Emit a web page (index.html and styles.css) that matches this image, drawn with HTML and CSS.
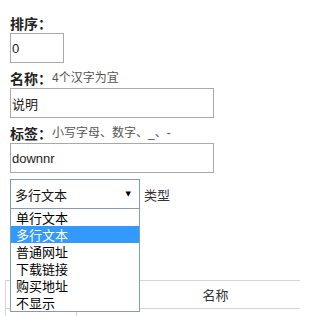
FILE: index.html
```html
<!DOCTYPE html>
<html lang="zh-CN">
<head>
<meta charset="utf-8">
<title>字段设置</title>
<link rel="stylesheet" href="styles.css">
</head>
<body>
<div class="form">
  <div class="field">
    <div class="label"><span class="label-text">排序</span><span class="colon">：</span></div>
    <input class="input input-short" type="text" value="0">
  </div>
  <div class="field">
    <div class="label"><span class="label-text">名称</span><span class="colon">：</span><span class="hint">4个汉字为宜</span></div>
    <input class="input input-long" type="text" value="说明">
  </div>
  <div class="field">
    <div class="label"><span class="label-text">标签</span><span class="colon">：</span><span class="hint">小写字母、数字、_、-</span></div>
    <input class="input input-long" type="text" value="downnr">
  </div>
  <div class="select-row">
    <div class="select-wrap">
      <div class="select">
        <span class="select-value">多行文本</span>
        <span class="select-arrow">▼</span>
      </div>
      <ul class="select-list">
        <li class="option">单行文本</li>
        <li class="option option-active">多行文本</li>
        <li class="option">普通网址</li>
        <li class="option">下载链接</li>
        <li class="option">购买地址</li>
        <li class="option">不显示</li>
      </ul>
    </div>
    <span class="select-note">类型</span>
  </div>
</div>
<table class="grid">
  <tr class="grid-head">
    <th class="col-first"></th>
    <th class="col-name">名称</th>
  </tr>
  <tr class="grid-row">
    <td class="col-first"></td>
    <td class="col-name"></td>
  </tr>
</table>
</body>
</html>
```
FILE: styles.css
```css
html, body {
  margin: 0;
  padding: 0;
  background: #fff;
  overflow: hidden;
}
body {
  width: 300px;
  height: 316px;
  font-family: "Liberation Sans", "Noto Sans CJK SC", sans-serif;
  color: #222;
}
.form {
  padding: 13px 0 0 10px;
}
.field {
  display: flex;
  flex-direction: column;
  align-items: flex-start;
}
.field + .field {
  margin-top: 5px;
}
.label {
  display: flex;
  align-items: center;
  height: 20px;
  white-space: nowrap;
}
.label-text {
  font-family: "Noto Sans CJK SC", sans-serif;
  font-size: 14px;
  font-weight: bold;
  line-height: 20px;
  color: #222;
}
.colon {
  display: inline-block;
  width: 14px;
  overflow: hidden;
  font-family: "Noto Sans CJK SC", sans-serif;
  font-size: 14px;
  font-weight: bold;
  line-height: 20px;
  text-align: center;
  color: #222;
}
.hint {
  font-size: 12px;
  line-height: 20px;
  color: #555;
}
.input {
  box-sizing: border-box;
  height: 30px;
  margin: 0;
  padding: 0 1px;
  border: 1px solid #a9a9a9;
  border-radius: 0;
  font-family: "Liberation Sans", "Noto Sans CJK SC", sans-serif;
  font-size: 13px;
  color: #222;
  background: #fff;
  outline: none;
}
.input-short {
  width: 54px;
}
.input-long {
  width: 204px;
}
.select-row {
  display: flex;
  align-items: center;
  margin-top: 6px;
}
.select-wrap {
  position: relative;
}
.select {
  box-sizing: border-box;
  width: 130px;
  height: 30px;
  border: 1px solid #7f9db9;
  display: flex;
  align-items: center;
  justify-content: space-between;
  padding: 0 8px 0 4px;
  font-family: "Noto Sans CJK SC", sans-serif;
  font-size: 13px;
  color: #111;
  background: #fff;
}
.select-arrow {
  font-family: "DejaVu Sans", sans-serif;
  font-size: 7px;
  color: #000;
}
.select-note {
  margin-left: 4px;
  font-family: "Noto Sans CJK SC", sans-serif;
  font-size: 13px;
  color: #333;
}
.select-list {
  position: absolute;
  left: 0;
  top: 29px;
  z-index: 5;
  box-sizing: border-box;
  width: 130px;
  margin: 0;
  padding: 0;
  list-style: none;
  border: 1px solid #7f9db9;
  background: #fff;
}
.option {
  height: 17px;
  line-height: 17px;
  padding-left: 5px;
  font-family: "Noto Sans CJK SC", sans-serif;
  font-size: 13px;
  color: #000;
}
.option-active {
  background: #3399ff;
  color: #fff;
}
.grid {
  margin: 71px 0 0 5px;
  width: 350px;
  border-collapse: collapse;
  table-layout: fixed;
}
.grid th, .grid td {
  border: 1px solid #d4d4d4;
  padding: 0;
}
.grid-head th {
  height: 27px;
  font-family: "Noto Sans CJK SC", sans-serif;
  font-size: 13px;
  font-weight: normal;
  color: #333;
  text-align: center;
}
.grid-row td {
  height: 27px;
}
.col-first {
  width: 70px;
}
```
